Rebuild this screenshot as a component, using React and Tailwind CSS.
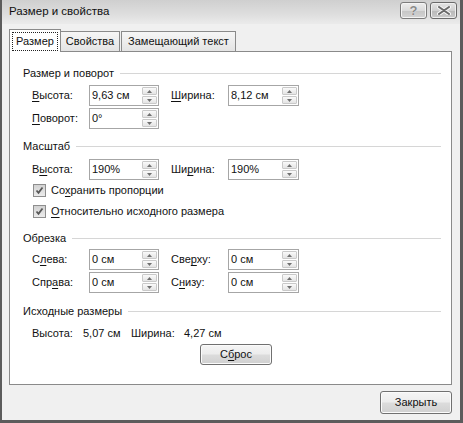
import React from "react";

function U({ children }) {
  return <span className="underline underline-offset-[2px] decoration-1">{children}</span>;
}

function Arrow({ up }) {
  return (
    <svg width="5" height="3" viewBox="0 0 5 3">
      {up ? <path d="M0 3 L2.5 0 L5 3 Z" fill="#707070" /> : <path d="M0 0 L2.5 3 L5 0 Z" fill="#707070" />}
    </svg>
  );
}

function Spin({ value, w = "w-[70px]" }) {
  return (
    <div className={`flex h-[21px] ${w} items-center border border-[#a6a6a6] bg-white`}>
      <span className="flex-1 pl-[2px] leading-none">{value}</span>
      <div className="mr-px flex h-[17px] w-[15px] flex-col gap-px">
        <div className="flex flex-1 items-center justify-center rounded-[1px] border border-[#c9c9c9] bg-[linear-gradient(#fafafa,#e4e4e4)]">
          <Arrow up />
        </div>
        <div className="flex flex-1 items-center justify-center rounded-[1px] border border-[#c9c9c9] bg-[linear-gradient(#fafafa,#e4e4e4)]">
          <Arrow />
        </div>
      </div>
    </div>
  );
}

function Header({ children, className = "" }) {
  return (
    <div className={`flex h-[16px] items-center pl-[13px] pr-[10px] ${className}`}>
      <span className="leading-none">{children}</span>
      <div className="ml-[6px] h-px flex-1 bg-[#d6d6d6]" />
    </div>
  );
}

function Row({ l1, v1, l2, v2, className = "" }) {
  return (
    <div className={`flex h-[21px] items-center pl-[22px] ${className}`}>
      <span className="w-[57px] leading-none">{l1}</span>
      <Spin value={v1} />
      {l2 && (
        <>
          <span className="ml-[12px] w-[57px] leading-none">{l2}</span>
          <Spin value={v2} w="w-[71px]" />
        </>
      )}
    </div>
  );
}

function Check({ children }) {
  return (
    <div className="flex h-[21px] items-center pl-[23px]">
      <div className="flex h-[13px] w-[13px] items-center justify-center border border-[#8e8e8e] bg-white">
        <div className="flex h-[11px] w-[11px] items-center justify-center bg-[linear-gradient(#d2d2d2,#ececec)]">
          <svg width="9" height="9" viewBox="0 0 9 9">
            <path d="M1.5 4.5 L3.5 6.8 L7.5 1.5" fill="none" stroke="#585858" strokeWidth="1.8" />
          </svg>
        </div>
      </div>
      <span className="ml-[5px] leading-none">{children}</span>
    </div>
  );
}

function Button({ children, className = "" }) {
  return (
    <div
      className={`flex items-center justify-center rounded-[3px] border border-[#707070] bg-[linear-gradient(#f5f5f5_0%,#ececec_48%,#dcdcdc_52%,#d0d0d0_100%)] shadow-[inset_0_0_0_1px_#fbfbfb] ${className}`}
    >
      <span className="leading-none">{children}</span>
    </div>
  );
}

export default function App() {
  return (
    <div className="relative flex h-[423px] w-[463px] flex-col border-b-[3px] border-l-2 border-r-[3px] border-[#5c5c5c] bg-[#f0f0f0] font-['Liberation_Sans',Arial,sans-serif] text-[11px] text-[#111]">
      {/* title bar */}
      <div className="flex h-[24px] items-center bg-[linear-gradient(#cfcfcf,#dedede_60%,#ebebeb)] pl-[7px] pr-[3px]">
        <span className="flex-1 text-[11.5px] leading-none text-[#101010]">Размер и свойства</span>
        <div className="mb-[3px] flex gap-[3px]">
          <div className="flex h-[17px] w-[27px] items-center justify-center rounded-[3px] border border-[#7c7c7c] bg-[linear-gradient(#ededed_0%,#dadada_50%,#c6c6c6_52%,#d4d4d4_100%)] shadow-[inset_0_0_0_1px_#f4f4f4]">
            <span className="text-[13px] font-bold leading-none text-[#8a8a8a] [text-shadow:0_0_1px_#fff]">?</span>
          </div>
          <div className="flex h-[17px] w-[27px] items-center justify-center rounded-[3px] border border-[#6a6a6a] bg-[linear-gradient(#e4e4e4_0%,#cfcfcf_50%,#b9b9b9_52%,#cacaca_100%)] shadow-[inset_0_0_0_1px_#eeeeee]">
            <svg width="14" height="9" viewBox="0 0 14 9">
              <path d="M2 1 L12 8 M12 1 L2 8" stroke="#f4f4f4" strokeWidth="4" strokeLinecap="round" />
              <path d="M2 1 L12 8 M12 1 L2 8" stroke="#6a6a6a" strokeWidth="2" strokeLinecap="round" />
            </svg>
          </div>
        </div>
      </div>

      {/* tabs */}
      <div className="mt-[5px] flex h-[22px] items-end pl-[7px]">
        <div className="relative z-10 -mb-px flex h-[23px] w-[52px] items-start border border-b-0 border-[#8a8a8a] bg-white pl-[2px] pt-[2px]">
          <div className="flex h-[19px] w-[46px] items-center justify-center border border-dotted border-[#222]">
            <span className="leading-none">Размер</span>
          </div>
        </div>
        <div className="flex h-[20px] w-[59px] items-center justify-center border border-b-0 border-l-0 border-[#8a8a8a] bg-[linear-gradient(#f6f6f6,#e4e4e4)]">
          <span className="leading-none">Свойства</span>
        </div>
        <div className="ml-px flex h-[20px] w-[115px] items-center justify-center border border-b-0 border-[#8a8a8a] bg-[linear-gradient(#f6f6f6,#e4e4e4)]">
          <span className="leading-none">Замещающий текст</span>
        </div>
      </div>

      {/* panel */}
      <div className="ml-[7px] mr-[8px] flex h-[334px] flex-col border border-[#8a8a8a] bg-white">
        <Header className="mt-[13px]">Размер и поворот</Header>
        <Row
          className="mt-[4px]"
          l1={<><U>В</U>ысота:</>}
          v1="9,63 см"
          l2={<><U>Ш</U>ирина:</>}
          v2="8,12 см"
        />
        <Row className="mt-[2px]" l1={<><U>П</U>оворот:</>} v1="0°" />

        <Header className="mt-[9px]">Масштаб</Header>
        <Row
          className="mt-[5px]"
          l1={<>В<U>ы</U>сота:</>}
          v1="190%"
          l2={<>Ши<U>р</U>ина:</>}
          v2="190%"
        />
        <Check>Со<U>х</U>ранить пропорции</Check>
        <Check><U>О</U>тносительно исходного размера</Check>

        <Header className="mt-[8px]">Обрезка</Header>
        <Row
          className="mt-[3px]"
          l1={<>С<U>л</U>ева:</>}
          v1="0 см"
          l2={<>Све<U>р</U>ху:</>}
          v2="0 см"
        />
        <Row
          className="mt-[2px]"
          l1={<>Спр<U>а</U>ва:</>}
          v1="0 см"
          l2={<>С<U>н</U>изу:</>}
          v2="0 см"
        />

        <Header className="mt-[10px]">Исходные размеры</Header>
        <div className="mt-[6px] flex h-[16px] items-center pl-[22px]">
          <span className="w-[51px] leading-none">Высота:</span>
          <span className="w-[48px] leading-none">5,07 см</span>
          <span className="w-[53px] leading-none">Ширина:</span>
          <span className="leading-none">4,27 см</span>
        </div>
        <div className="mt-[3px] flex pl-[190px]">
          <Button className="h-[21px] w-[72px]">
            С<U>б</U>рос
          </Button>
        </div>
      </div>

      {/* footer */}
      <div className="mt-[6px] flex justify-end pr-[8px]">
        <Button className="h-[23px] w-[72px]">Закрыть</Button>
      </div>
    </div>
  );
}
